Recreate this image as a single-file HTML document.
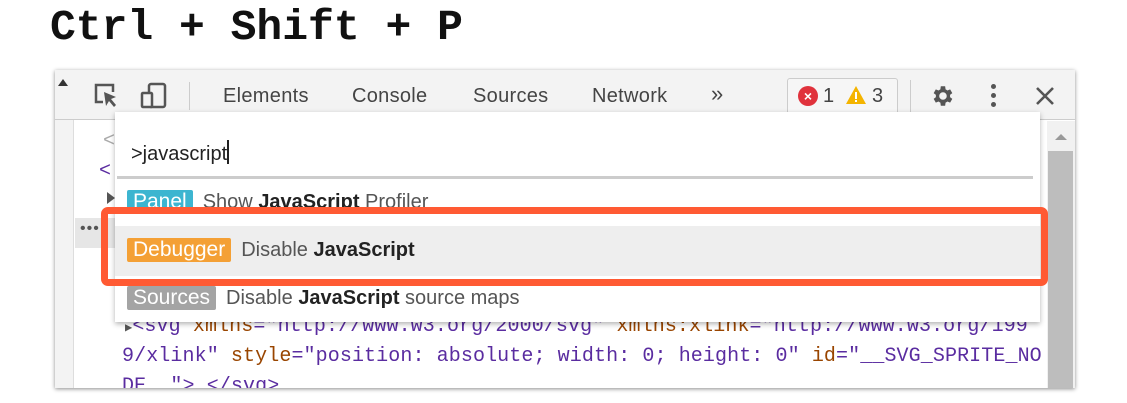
<!DOCTYPE html>
<html><head><meta charset="utf-8"><style>
*{margin:0;padding:0;box-sizing:border-box}
body{width:1127px;height:403px;background:#fff;position:relative;overflow:hidden;font-family:"Liberation Sans",sans-serif}
.a{position:absolute}
.title{left:50px;top:3px;font:bold 43px "Liberation Mono",monospace;color:#111}
.win{left:55px;top:70px;width:1020px;height:318px;background:#fff;box-shadow:0 1px 4px rgba(0,0,0,.45);overflow:hidden}
.tb{left:0;top:0;width:1020px;height:50px;background:#f3f3f3;border-bottom:1px solid #ccc}
.tab{top:15px;font-size:20px;color:#444;letter-spacing:.3px}
.code{font:20px "Liberation Mono",monospace;color:#5a2ca0;white-space:pre;letter-spacing:.1px}
.attr{color:#994500}
.badge{display:inline-block;color:#fff;padding:0 6px;border-radius:2px;margin-right:10px;font-size:21px}
.row{font-size:20px;color:#555;white-space:nowrap}
.row b{color:#222}
</style></head><body>
<div class="a title">Ctrl + Shift + P</div>
<div class="a win">
  <div class="a" style="left:0;top:0;width:19px;height:318px;background:#f3f3f3;border-right:1px solid #ddd"></div>
  <div class="a tb"></div>
  <div class="a" style="left:3px;top:9px;width:0;height:0;border-left:5px solid transparent;border-right:5px solid transparent;border-bottom:7px solid #333"></div>
  <svg class="a" style="left:38px;top:12px" width="28" height="28" viewBox="0 0 28 28"><path d="M10 20H3V3h17v7" fill="none" stroke="#555" stroke-width="2.5"/><path d="M11 10l12 5-5 2 5 6-2 2-5-6-3 5z" fill="#555"/></svg>
  <svg class="a" style="left:85px;top:12px" width="28" height="28" viewBox="0 0 28 28"><rect x="9" y="2" width="16" height="23" rx="2" fill="none" stroke="#555" stroke-width="2.5"/><rect x="2" y="11" width="10" height="14" rx="1" fill="#f3f3f3" stroke="#555" stroke-width="2.5"/></svg>
  <div class="a" style="left:134px;top:12px;width:1px;height:28px;background:#ccc"></div>
  <div class="a tab" style="left:168px">Elements</div>
  <div class="a tab" style="left:297px">Console</div>
  <div class="a tab" style="left:418px">Sources</div>
  <div class="a tab" style="left:537px">Network</div>
  <div class="a tab" style="left:656px;font-size:22px;top:11px">»</div>
  <div class="a" style="left:732px;top:8px;width:111px;height:38px;border:1px solid #ccc;border-radius:3px;background:#f6f6f6"></div>
  <div class="a" style="left:743px;top:16px;width:20px;height:20px;border-radius:50%;background:#e0323c;color:#fff;font:bold 14px/20px 'Liberation Sans';text-align:center">×</div>
  <div class="a tab" style="left:768px">1</div>
  <svg class="a" style="left:790px;top:15px" width="22" height="20" viewBox="0 0 22 20"><path d="M11 1L21 19H1z" fill="#f4b400"/><rect x="10" y="7" width="2" height="7" fill="#fff"/><rect x="10" y="15" width="2" height="2" fill="#fff"/></svg>
  <div class="a tab" style="left:817px">3</div>
  <div class="a" style="left:855px;top:10px;width:1px;height:32px;background:#ccc"></div>
  <svg class="a" style="left:874px;top:13px" width="26" height="26" viewBox="0 0 24 24"><path fill="#555" d="M19.4 13a7.5 7.5 0 000-2l2.1-1.6-2-3.5-2.5 1a7 7 0 00-1.7-1L14.9 3h-4l-.4 2.9a7 7 0 00-1.7 1l-2.5-1-2 3.5L6.4 11a7.5 7.5 0 000 2l-2.1 1.6 2 3.5 2.5-1a7 7 0 001.7 1l.4 2.9h4l.4-2.9a7 7 0 001.7-1l2.5 1 2-3.5zM12.9 15.5a3.5 3.5 0 110-7 3.5 3.5 0 010 7z"/></svg>
  <div class="a" style="left:936px;top:14px;width:5px;height:5px;border-radius:50%;background:#555;box-shadow:0 9px 0 #555,0 18px 0 #555"></div>
  <svg class="a" style="left:979px;top:15px" width="22" height="22" viewBox="0 0 22 22"><path d="M3 3l16 16M19 3L3 19" stroke="#555" stroke-width="2.6"/></svg>
  <div class="a" style="left:992px;top:51px;width:28px;height:267px;background:#f1f1f1"></div>
  <div class="a" style="left:1000px;top:64px;width:0;height:0;border-left:6px solid transparent;border-right:6px solid transparent;border-bottom:6px solid #999"></div>
  <div class="a" style="left:993px;top:81px;width:25px;height:237px;background:#bdbdbd"></div>
  <div class="a code" style="left:48px;top:60px;color:#aaa">&lt;</div>
  <div class="a code" style="left:44px;top:90px">&lt;</div>
  <div class="a" style="left:52px;top:122px;border-top:6px solid transparent;border-bottom:6px solid transparent;border-left:8px solid #555"></div>
  <div class="a" style="left:20px;top:148px;width:60px;height:30px;background:#e6e6e6"></div>
  <div class="a" style="left:25px;top:150px;font-size:16px;color:#555;letter-spacing:1px">•••</div>
  <div class="a code" style="left:70px;top:245px"><span style="color:#555;font-size:12px">▶</span>&lt;svg <span class="attr">xmlns</span>="http://www.w3.org/2000/svg" <span class="attr">xmlns:xlink</span>="http://www.w3.org/199</div>
  <div class="a code" style="left:67px;top:275px">9/xlink" <span class="attr">style</span>="position: absolute; width: 0; height: 0" <span class="attr">id</span>="__SVG_SPRITE_NO</div>
  <div class="a code" style="left:67px;top:305px">DE__"&gt; &lt;/svg&gt;</div>
  <div class="a" style="left:60px;top:42px;width:925px;height:210px;background:#fff;box-shadow:0 2px 5px rgba(0,0,0,.3)">
    <div class="a" style="left:16px;top:28px;font-size:20px;color:#222">&gt;javascript<span style="display:inline-block;width:2px;height:24px;background:#222;vertical-align:-4px"></span></div>
    <div class="a" style="left:2px;top:64px;width:916px;height:3px;background:#ccc"></div>
    <div class="a row" style="left:12px;top:78px"><span class="badge" style="background:#3cb5d0">Panel</span>Show <b>JavaScript</b> Profiler</div>
    <div class="a" style="left:0;top:114px;width:925px;height:50px;background:#eee"></div>
    <div class="a row" style="left:12px;top:126px"><span class="badge" style="background:#f4a035">Debugger</span>Disable <b>JavaScript</b></div>
    <div class="a row" style="left:12px;top:174px"><span class="badge" style="background:#a4a4a4">Sources</span>Disable <b>JavaScript</b> source maps</div>
  </div>
  <div class="a" style="left:46px;top:137px;width:947px;height:79px;border:7px solid #ff5a33;border-radius:7px"></div>
</div>
</body></html>
